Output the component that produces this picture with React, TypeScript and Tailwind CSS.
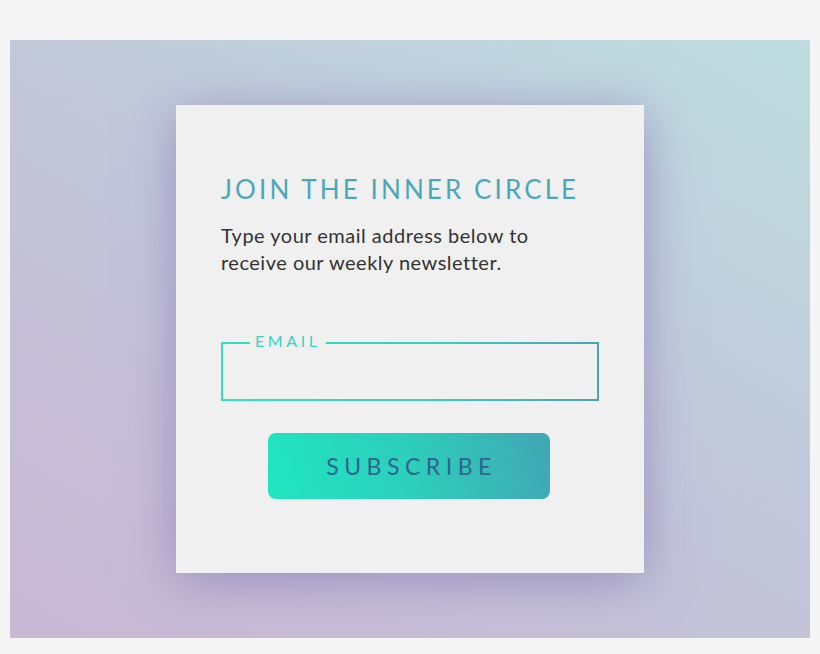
import React from "react";

export default function App() {
  return (
    <div className="w-[820px] h-[654px] bg-[#f5f5f5] pt-[40px] px-[10px]" style={{ fontFamily: "Lato, 'Noto Sans', sans-serif" }}>
      <div className="w-[800px] h-[598px] bg-[linear-gradient(30deg,#c9b7d3_0%,#c3c4d8_45%,#bedde0_100%)] flex justify-center pt-[65px]">
        <div className="w-[468px] h-[468px] bg-[#f0f0f0] shadow-[0_8px_45px_rgba(140,128,185,0.75)] pl-[45px] pr-[46px] pt-[69px] flex flex-col">
          <h1 className="text-[26px] leading-[30px] tracking-[3.1px] text-[#4aa8b8] font-normal whitespace-nowrap">JOIN THE INNER CIRCLE</h1>
          <p className="mt-[18px] text-[20px] leading-[27px] tracking-[0.5px] text-[#333] w-[340px]">Type your email address below to receive our weekly newsletter.</p>
          <div className="relative mt-[66px] w-[378px] h-[59px] p-[2px] bg-[linear-gradient(90deg,#2fe0c2,#38cdbd_60%,#4aa3b1)]">
            <div className="w-full h-full bg-[#f0f0f0]" />
            <span className="absolute left-[29px] top-[-10px] bg-[#f0f0f0] px-[5px] text-[16px] leading-[18px] tracking-[3.6px] text-[#33d6be]">EMAIL</span>
          </div>
          <div className="mt-[32px] flex justify-center pr-[1px]">
            <button className="w-[282px] h-[66px] rounded-[8px] bg-[linear-gradient(75deg,#1fe6c0_0%,#2ccfbb_50%,#42a6b4_100%)] text-[#2f6590] text-[23px] tracking-[5.5px] pl-[5px]">SUBSCRIBE</button>
          </div>
        </div>
      </div>
    </div>
  );
}
